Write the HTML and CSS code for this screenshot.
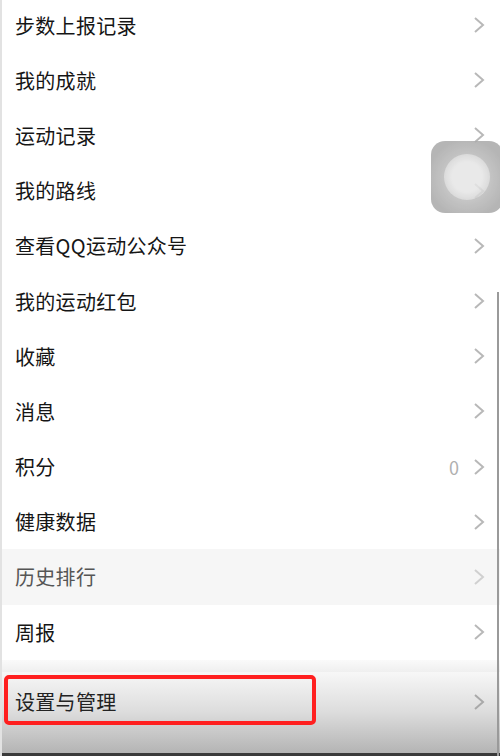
FILE: index.html
```html
<!DOCTYPE html>
<html lang="zh-CN">
<head>
    <meta charset="UTF-8">
    <meta name="viewport" content="width=device-width, initial-scale=1.0">
    <title>QQ运动 - 更多</title>
    <link rel="stylesheet" href="styles.css">
</head>
<body>
    <div class="menu">
        <div class="menu-item"><span class="label">步数上报记录</span><svg class="arrow" viewBox="0 0 12 18"><polyline points="2,2 10,9 2,16"/></svg></div>
        <div class="menu-item"><span class="label">我的成就</span><svg class="arrow" viewBox="0 0 12 18"><polyline points="2,2 10,9 2,16"/></svg></div>
        <div class="menu-item"><span class="label">运动记录</span><svg class="arrow" viewBox="0 0 12 18"><polyline points="2,2 10,9 2,16"/></svg></div>
        <div class="menu-item"><span class="label">我的路线</span><svg class="arrow" viewBox="0 0 12 18"><polyline points="2,2 10,9 2,16"/></svg></div>
        <div class="menu-item"><span class="label">查看QQ运动公众号</span><svg class="arrow" viewBox="0 0 12 18"><polyline points="2,2 10,9 2,16"/></svg></div>
        <div class="menu-item"><span class="label">我的运动红包</span><svg class="arrow" viewBox="0 0 12 18"><polyline points="2,2 10,9 2,16"/></svg></div>
        <div class="menu-item"><span class="label">收藏</span><svg class="arrow" viewBox="0 0 12 18"><polyline points="2,2 10,9 2,16"/></svg></div>
        <div class="menu-item"><span class="label">消息</span><svg class="arrow" viewBox="0 0 12 18"><polyline points="2,2 10,9 2,16"/></svg></div>
        <div class="menu-item"><span class="label">积分</span><span class="value">0</span><svg class="arrow" viewBox="0 0 12 18"><polyline points="2,2 10,9 2,16"/></svg></div>
        <div class="menu-item"><span class="label">健康数据</span><svg class="arrow" viewBox="0 0 12 18"><polyline points="2,2 10,9 2,16"/></svg></div>
        <div class="menu-item pressed"><span class="label">历史排行</span><svg class="arrow" viewBox="0 0 12 18"><polyline points="2,2 10,9 2,16"/></svg></div>
        <div class="menu-item"><span class="label">周报</span><svg class="arrow" viewBox="0 0 12 18"><polyline points="2,2 10,9 2,16"/></svg></div>
    </div>

    <div class="divider"></div>

    <div class="footer">
        <div class="menu-item settings"><span class="label">设置与管理</span><svg class="arrow" viewBox="0 0 12 18"><polyline points="2,2 10,9 2,16"/></svg></div>
        <div class="highlight"></div>
    </div>

    <div class="scrollbar"></div>

    <!-- floating assistive button -->
    <div class="float-btn"><div class="float-dot"></div></div>
</body>
</html>
```

FILE: styles.css
```css
body {
    margin: 0;
    width: 500px;
    height: 756px;
    overflow: hidden;
    background-color: #fff;
    font-family: "Noto Sans CJK SC", "Noto Sans", sans-serif;
    border-left: 2px solid #e2e2e2;
    box-sizing: border-box;
    position: relative;
}
.menu {
    margin-top: -2.5px;
}
.menu-item {
    height: 55.2px;
    display: flex;
    align-items: center;
    padding: 0 15px 0 13px;
    box-sizing: border-box;
}
.label {
    flex: 1;
    font-size: 20px;
    color: #151515;
    letter-spacing: 0.3px;
}
.value {
    font-size: 18px;
    color: #b0b0b0;
    margin-right: 14px;
}
.arrow {
    width: 12px;
    height: 18px;
    fill: none;
    stroke: #b8b8b8;
    stroke-width: 2;
}
.pressed {
    background-color: #f6f6f6;
}
.pressed .label {
    color: #555;
}
.pressed .arrow {
    stroke: #d0d0d0;
}
.divider {
    height: 12px;
    background: linear-gradient(#fafafa, #efefef);
}
.footer {
    height: 81px;
    position: relative;
    background: linear-gradient(#f7f7f7, #dcdcdc 50%, #b4b4b4);
    border-bottom: 3px solid #3a3a3a;
}
.settings {
    height: 60px;
}
.settings .label {
    color: #222;
}
.settings .arrow {
    stroke: #a9a9a9;
}
.highlight {
    position: absolute;
    left: 2px;
    top: 3px;
    width: 312px;
    height: 50px;
    border: 4px solid #ff1f1f;
    border-radius: 5px;
    box-sizing: border-box;
}
.scrollbar {
    position: absolute;
    right: 1px;
    top: 292px;
    width: 2px;
    height: 464px;
    background-color: #9a9a9a;
}
.float-btn {
    position: absolute;
    left: 429px;
    top: 141px;
    width: 72px;
    height: 72px;
    border-radius: 14px;
    background: radial-gradient(circle at 50% 52%, #bdbdbd 40%, #a9a9a9 75%);
    opacity: 0.85;
    display: flex;
    align-items: center;
    justify-content: center;
}
.float-dot {
    width: 46px;
    height: 46px;
    border-radius: 50%;
    background: radial-gradient(circle, #e6e6e6 45%, #d2d2d2 75%, #c0c0c0);
}
```
